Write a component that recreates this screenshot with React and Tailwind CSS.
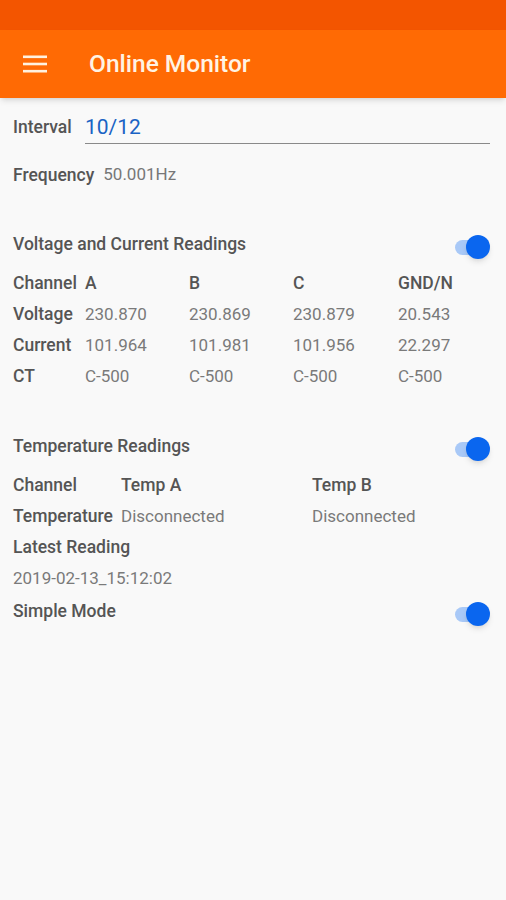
import React, { useState } from 'react';

function Toggle({ on, onChange }) {
  return (
    <button onClick={() => onChange(!on)} className="relative w-[40px] h-[26px] flex items-center mt-[6px]">
      <span className={`absolute left-[2px] w-[32px] h-[15px] rounded-full ${on ? 'bg-[#a9c9f7]' : 'bg-[#b9b9b9]'}`} />
      <span
        className={`absolute w-[24px] h-[24px] rounded-full shadow-md ${on ? 'left-[13px] bg-[#0a66ef]' : 'left-0 bg-[#f1f1f1]'}`}
      />
    </button>
  );
}

const channels = [
  { label: 'Voltage', values: ['230.870', '230.869', '230.879', '20.543'] },
  { label: 'Current', values: ['101.964', '101.981', '101.956', '22.297'] },
  { label: 'CT', values: ['C-500', 'C-500', 'C-500', 'C-500'] },
];

export default function App() {
  const [vc, setVc] = useState(true);
  const [temp, setTemp] = useState(true);
  const [simple, setSimple] = useState(true);

  return (
    <div className="min-h-[900px] bg-[#f9f9f9] font-['Roboto',sans-serif] text-[17.5px]">
      <div className="h-[30px] bg-[#f35500]" />
      <div className="h-[68px] bg-[#ff6a04] flex items-center shadow-md">
        <div className="w-[89px] pl-[23px]">
          <svg width="24" height="18" viewBox="0 0 24 18">
            <rect x="0" y="0.5" width="24" height="2.6" fill="#fff1df" />
            <rect x="0" y="7.7" width="24" height="2.6" fill="#fff1df" />
            <rect x="0" y="14.9" width="24" height="2.6" fill="#fff1df" />
          </svg>
        </div>
        <h1 className="text-[#fff3e3] text-[24.5px] font-medium">Online Monitor</h1>
      </div>

      <div className="px-[13px]">
        <div className="flex items-end h-[43px] pt-[11px] mt-[3px]">
          <span className="w-[72px] font-medium text-[#555] pb-[4px]">Interval</span>
          <div className="flex-1 mr-[3px] border-b-[1.5px] border-[#8a8a8a] h-[32px] flex items-center">
            <span className="text-[#1a63c4] text-[21px] leading-none">10/12</span>
          </div>
        </div>

        <div className="flex items-center h-[40px] mt-[11px]">
          <span className="font-medium text-[#555] mr-[9px]">Frequency</span>
          <span className="text-[#777] text-[17px]">50.001Hz</span>
        </div>

        <div className="flex items-center justify-between h-[32px] mt-[33px]">
          <span className="font-medium text-[#555]">Voltage and Current Readings</span>
          <Toggle on={vc} onChange={setVc} />
        </div>

        <div className="mt-[8px] text-[17px]">
          <div className="grid grid-cols-[72px_104px_104px_105px_1fr] items-center h-[31px] font-medium text-[#555] text-[17.5px]">
            <span>Channel</span>
            <span>A</span>
            <span>B</span>
            <span>C</span>
            <span>GND/N</span>
          </div>
          {channels.map((row) => (
            <div key={row.label} className="grid grid-cols-[72px_104px_104px_105px_1fr] items-center h-[31px]">
              <span className="font-medium text-[#555] text-[17.5px]">{row.label}</span>
              {row.values.map((v, i) => (
                <span key={i} className="text-[#7a7a7a]">{v}</span>
              ))}
            </div>
          ))}
        </div>

        <div className="flex items-center justify-between h-[32px] mt-[38px]">
          <span className="font-medium text-[#555]">Temperature Readings</span>
          <Toggle on={temp} onChange={setTemp} />
        </div>

        <div className="mt-[8px]">
          <div className="grid grid-cols-[108px_191px_1fr] items-center h-[31px] font-medium text-[#555]">
            <span>Channel</span>
            <span>Temp A</span>
            <span>Temp B</span>
          </div>
          <div className="grid grid-cols-[108px_191px_1fr] items-center h-[31px] text-[17px]">
            <span className="font-medium text-[#555] text-[17.5px]">Temperature</span>
            <span className="text-[#7a7a7a]">Disconnected</span>
            <span className="text-[#7a7a7a]">Disconnected</span>
          </div>
          <div className="flex items-center h-[31px] font-medium text-[#555]">Latest Reading</div>
          <div className="flex items-center h-[31px] text-[#7a7a7a] text-[17px]">2019-02-13_15:12:02</div>
        </div>

        <div className="flex items-center justify-between h-[32px] mt-[1px]">
          <span className="font-medium text-[#555]">Simple Mode</span>
          <Toggle on={simple} onChange={setSimple} />
        </div>
      </div>
    </div>
  );
}
